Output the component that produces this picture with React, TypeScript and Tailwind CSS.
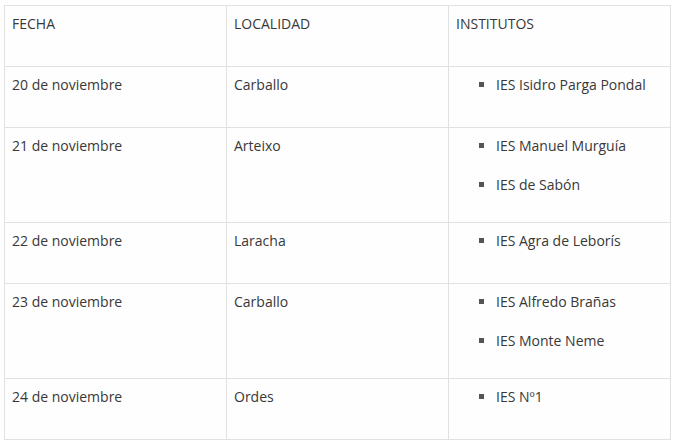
import React from "react";

const rows: { fecha: string; loc: string; inst: string[] }[] = [
  { fecha: "20 de noviembre", loc: "Carballo", inst: ["IES Isidro Parga Pondal"] },
  { fecha: "21 de noviembre", loc: "Arteixo", inst: ["IES Manuel Murguía", "IES de Sabón"] },
  { fecha: "22 de noviembre", loc: "Laracha", inst: ["IES Agra de Leborís"] },
  { fecha: "23 de noviembre", loc: "Carballo", inst: ["IES Alfredo Brañas", "IES Monte Neme"] },
  { fecha: "24 de noviembre", loc: "Ordes", inst: ["IES Nº1"] },
];

const td = "border border-[#e1e1e1] px-[7px] pt-[6px] align-top text-left font-normal";

export default function App() {
  return (
    <div
      className="w-[676px] h-[444px] bg-white pl-1 pt-[5px] text-[14px] text-[#383838]"
      style={{ fontFamily: '"Open Sans", "Noto Sans", sans-serif' }}
    >
      <table className="w-[667px] table-fixed border-collapse bg-[#fefefe]">
        <thead>
          <tr>
            <th className={td}>
              <div className="leading-6 pb-[30px]">FECHA</div>
            </th>
            <th className={td}>
              <div className="leading-6 pb-[30px]">LOCALIDAD</div>
            </th>
            <th className={td}>
              <div className="leading-6 pb-[30px]">INSTITUTOS</div>
            </th>
          </tr>
        </thead>
        <tbody>
          {rows.map((r) => (
            <tr key={r.fecha}>
              <td className={td}>
                <div className="leading-6 pb-[30px]">{r.fecha}</div>
              </td>
              <td className={td}>
                <div className="leading-6 pb-[30px]">{r.loc}</div>
              </td>
              <td className={td}>
                <ul className="list-[square] pl-[40px] flex flex-col gap-[15px] pb-[25px] marker:text-[#555]">
                  {r.inst.map((i) => (
                    <li key={i} className="leading-6 list-item">
                      {i}
                    </li>
                  ))}
                </ul>
              </td>
            </tr>
          ))}
        </tbody>
      </table>
    </div>
  );
}
